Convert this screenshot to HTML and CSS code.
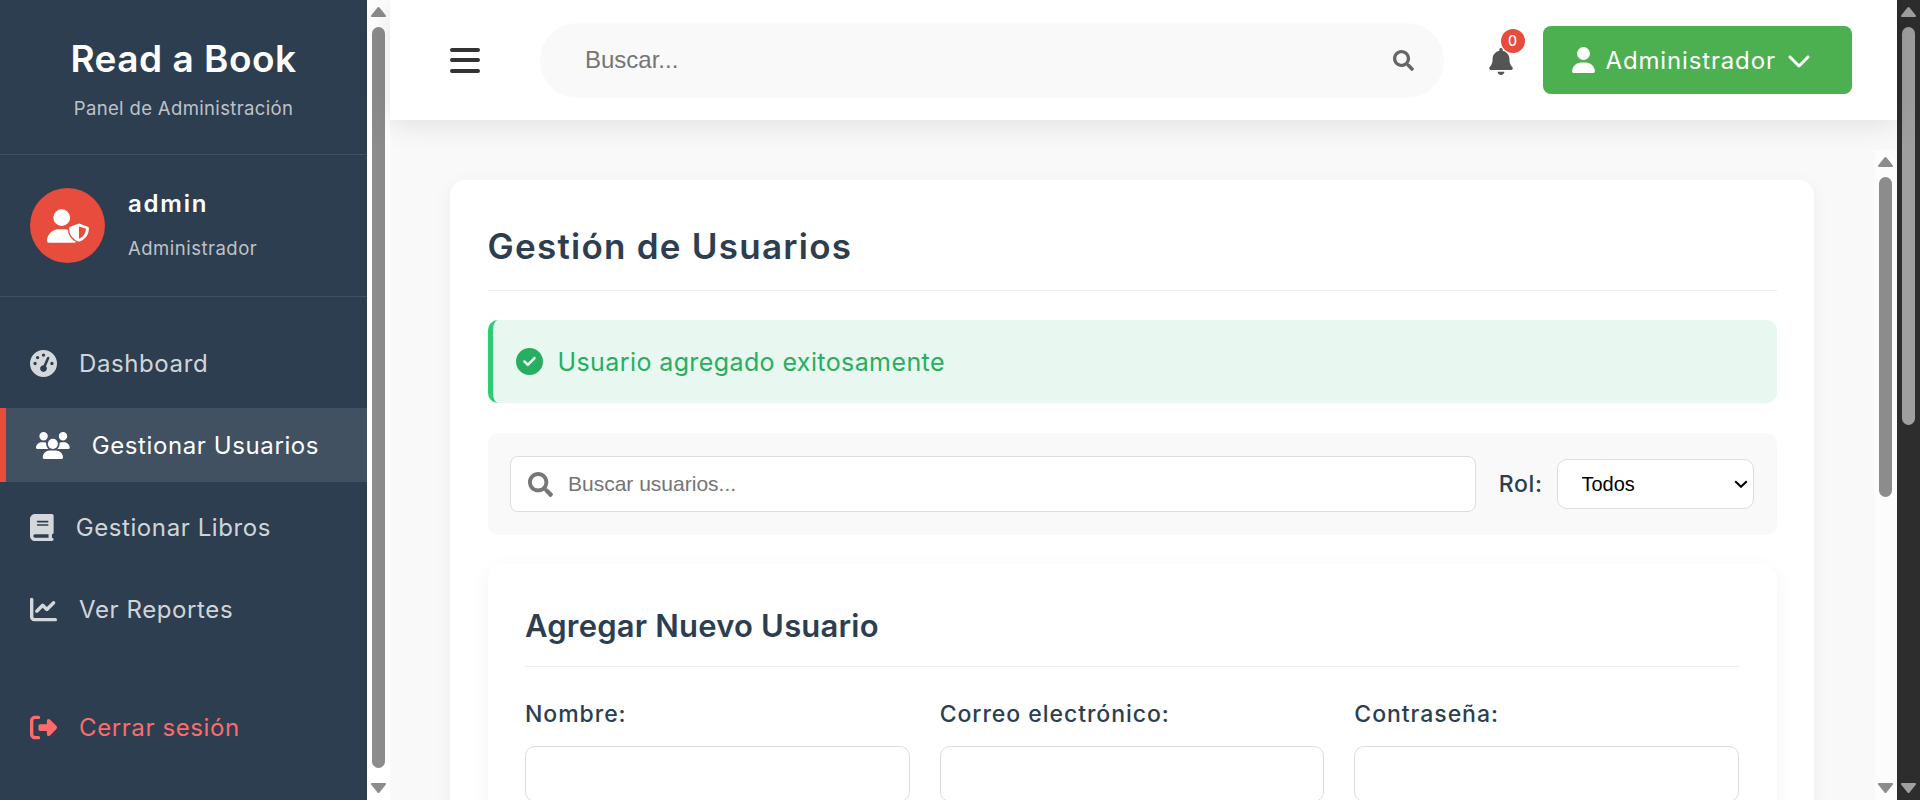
FILE: index.html
```html
<!DOCTYPE html>
<html lang="es">
<head>
    <meta charset="UTF-8">
    <title>Gestión de Usuarios - Read a Book</title>
    <link rel="stylesheet" href="styles.css">
</head>
<body>
    <aside class="sidebar">
        <div class="sidebar-header">
            <h1>Read a Book</h1>
            <p>Panel de Administración</p>
        </div>
        <div class="sidebar-user">
            <div class="avatar">
                <svg viewBox="0 0 640 512" class="avatar-icon">
                    <path fill="#fff" d="M224 256A128 128 0 1 0 224 0a128 128 0 1 0 0 256zm-45.7 48C79.8 304 0 383.8 0 482.3C0 498.7 13.3 512 29.7 512H418.3c16.4 0 29.7-13.3 29.7-29.7C448 383.8 368.2 304 269.7 304H178.3z"/>
                    <path fill="#fff" stroke="#e74c3c" stroke-width="44" paint-order="stroke" d="M488 217L624 268c8 3 14 10 14 19c0 90-40 165-140 206c-6 2-14 2-20 0C376 452 338 377 338 287c0-9 6-16 14-19Z"/>
                    <path fill="#e74c3c" d="M488 262V452C556 420 590 365 594 298Z"/>
                </svg>
            </div>
            <div class="user-info">
                <span class="user-name">admin</span>
                <span class="user-role">Administrador</span>
            </div>
        </div>
        <nav class="nav">
            <a class="nav-item" href="#">
                <svg class="nav-icon" viewBox="0 0 512 512"><path d="M0 256a256 256 0 1 1 512 0A256 256 0 1 1 0 256zM288 96a32 32 0 1 0 -64 0 32 32 0 1 0 64 0zM256 416c35.3 0 64-28.7 64-64c0-17.4-6.9-33.1-18.1-44.6L366 161.7c5.3-12.1-.2-26.3-12.3-31.6s-26.3 .2-31.6 12.3L257.9 288c-.6 0-1.3 0-1.9 0c-35.3 0-64 28.7-64 64s28.7 64 64 64zM176 144a32 32 0 1 0 -64 0 32 32 0 1 0 64 0zM96 288a32 32 0 1 0 0-64 32 32 0 1 0 0 64zm352-32a32 32 0 1 0 -64 0 32 32 0 1 0 64 0z"/></svg>
                Dashboard
            </a>
            <a class="nav-item active" href="#">
                <svg class="nav-icon" viewBox="0 0 640 512"><path d="M144 0a80 80 0 1 1 0 160A80 80 0 1 1 144 0zM512 0a80 80 0 1 1 0 160A80 80 0 1 1 512 0zM0 298.7C0 239.8 47.8 192 106.7 192h42.7c15.9 0 31 3.5 44.6 9.7c-1.3 7.2-1.9 14.7-1.9 22.3c0 38.2 16.8 72.5 43.3 96c-.2 0-.4 0-.7 0H21.3C9.6 320 0 310.4 0 298.7zM405.3 320c-.2 0-.4 0-.7 0c26.6-23.5 43.3-57.8 43.3-96c0-7.6-.7-15-1.9-22.3c13.6-6.3 28.7-9.7 44.6-9.7h42.7C592.2 192 640 239.8 640 298.7c0 11.8-9.6 21.3-21.3 21.3H405.3zM224 224a96 96 0 1 1 192 0 96 96 0 1 1 -192 0zM128 485.3C128 411.7 187.7 352 261.3 352H378.7C452.3 352 512 411.7 512 485.3c0 14.7-11.9 26.7-26.7 26.7H154.7c-14.7 0-26.7-11.9-26.7-26.7z"/></svg>
                Gestionar Usuarios
            </a>
            <a class="nav-item" href="#">
                <svg class="nav-icon" viewBox="0 0 448 512"><path d="M96 0C43 0 0 43 0 96V416c0 53 43 96 96 96H384h32c17.7 0 32-14.3 32-32s-14.3-32-32-32V384c17.7 0 32-14.3 32-32V32c0-17.7-14.3-32-32-32H384 96zm0 384H352v64H96c-17.7 0-32-14.3-32-32s14.3-32 32-32zm32-240c0-8.8 7.2-16 16-16H336c8.8 0 16 7.2 16 16s-7.2 16-16 16H144c-8.8 0-16-7.2-16-16zm16 48H336c8.8 0 16 7.2 16 16s-7.2 16-16 16H144c-8.8 0-16-7.2-16-16s7.2-16 16-16z"/></svg>
                Gestionar Libros
            </a>
            <a class="nav-item" href="#">
                <svg class="nav-icon" viewBox="0 0 512 512"><path d="M64 64c0-17.7-14.3-32-32-32S0 46.3 0 64V400c0 44.2 35.8 80 80 80H480c17.7 0 32-14.3 32-32s-14.3-32-32-32H80c-8.8 0-16-7.2-16-16V64zm406.6 86.6c12.5-12.5 12.5-32.8 0-45.3s-32.8-12.5-45.3 0L320 210.7l-57.4-57.4c-12.5-12.5-32.8-12.5-45.3 0l-112 112c-12.5 12.5-12.5 32.8 0 45.3s32.8 12.5 45.3 0L240 221.3l57.4 57.4c12.5 12.5 32.8 12.5 45.3 0l128-128z"/></svg>
                Ver Reportes
            </a>
            <a class="nav-item logout" href="#">
                <svg class="nav-icon" viewBox="0 0 512 512"><path d="M377.9 105.9L500.7 228.7c7.2 7.2 11.3 17.1 11.3 27.3s-4.1 20.1-11.3 27.3L377.9 406.1c-6.4 6.4-15 9.9-24 9.9c-18.7 0-33.9-15.2-33.9-33.9l0-62.1-128 0c-17.7 0-32-14.3-32-32l0-64c0-17.7 14.3-32 32-32l128 0 0-62.1c0-18.7 15.2-33.9 33.9-33.9c9 0 17.6 3.6 24 9.9zM160 96L96 96c-17.7 0-32 14.3-32 32l0 256c0 17.7 14.3 32 32 32l64 0c17.7 0 32 14.3 32 32s-14.3 32-32 32l-64 0c-53 0-96-43-96-96L0 128C0 75 43 32 96 32l64 0c17.7 0 32 14.3 32 32s-14.3 32-32 32z"/></svg>
                Cerrar sesión
            </a>
        </nav>
    </aside>

    <div class="scrollbar sidebar-scroll">
        <svg class="arrow" viewBox="0 0 15 10"><path d="M6.5 .6c.5-.7 1.500-.7 2 0l6.200 7.600c.6 .8 .2 1.800-.8 1.800H1.100c-1 0-1.400-1-.8-1.800z"/></svg>
        <span class="thumb"></span>
        <svg class="arrow arrow-down" viewBox="0 0 15 10"><path d="M6.5 .6c.5-.7 1.500-.7 2 0l6.200 7.600c.6 .8 .2 1.800-.8 1.800H1.100c-1 0-1.400-1-.8-1.800z"/></svg>
    </div>

    <div class="main">
        <header class="topbar">
            <button class="menu-toggle"><span></span><span></span><span></span></button>
            <div class="top-search">
                <input type="text" placeholder="Buscar...">
                <svg viewBox="0 0 512 512"><path d="M505 442.7L405.3 343c-4.5-4.5-10.6-7-17-7H372c27.6-35.3 44-79.7 44-128C416 93.1 322.9 0 208 0S0 93.1 0 208s93.1 208 208 208c48.3 0 92.7-16.4 128-44v16.3c0 6.4 2.5 12.5 7 17l99.7 99.7c9.4 9.4 24.6 9.4 33.9 0l28.3-28.3c9.4-9.4 9.4-24.6.1-34zM208 336c-70.7 0-128-57.2-128-128 0-70.7 57.2-128 128-128 70.7 0 128 57.2 128 128 0 70.7-57.2 128-128 128z"/></svg>
            </div>
            <div class="bell">
                <svg viewBox="0 0 448 512"><path d="M224 0c-17.7 0-32 14.3-32 32V51.2C119 66 64 130.6 64 208v18.8c0 47-17.3 92.4-48.5 127.6l-7.4 8.3c-8.4 9.4-10.4 22.9-5.3 34.4S19.4 416 32 416H416c12.6 0 24-7.4 29.2-18.9s3.1-25-5.3-34.4l-7.4-8.3C401.3 319.2 384 273.9 384 226.8V208c0-77.4-55-142-128-156.8V32c0-17.7-14.3-32-32-32zm45.3 493.3c12-12 18.7-28.3 18.7-45.3H224 160c0 17 6.7 33.3 18.7 45.3s28.3 18.7 45.3 18.7s33.3-6.7 45.3-18.7z"/></svg>
                <span class="badge">0</span>
            </div>
            <button class="admin-btn">
                <svg class="admin-user" viewBox="0 0 448 512"><path d="M224 256A128 128 0 1 0 224 0a128 128 0 1 0 0 256zm-45.7 48C79.8 304 0 383.8 0 482.3C0 498.7 13.3 512 29.7 512H418.3c16.4 0 29.7-13.3 29.7-29.7C448 383.8 368.2 304 269.7 304H178.3z"/></svg>
                Administrador
                <svg class="admin-caret" viewBox="0 0 512 512"><path d="M233.4 406.6c12.5 12.5 32.8 12.5 45.3 0l192-192c12.5-12.5 12.5-32.8 0-45.3s-32.8-12.5-45.3 0L256 338.7 86.6 169.4c-12.5-12.5-32.8-12.5-45.3 0s-12.5 32.8 0 45.3l192 192z"/></svg>
            </button>
        </header>

        <div class="body-area">
            <main class="content">
                <section class="card">
                    <h2>Gestión de Usuarios</h2>
                    <div class="alert">
                        <svg viewBox="0 0 512 512"><path d="M256 512A256 256 0 1 0 256 0a256 256 0 1 0 0 512zM369 209L241 337c-9.4 9.4-24.6 9.4-33.9 0l-64-64c-9.4-9.4-9.4-24.6 0-33.9s24.6-9.4 33.9 0l47 47L335 175c9.4-9.4 24.6-9.4 33.9 0s9.4 24.6 0 33.9z"/></svg>
                        Usuario agregado exitosamente
                    </div>
                    <div class="filters">
                        <div class="filter-search">
                            <svg viewBox="0 0 512 512"><path d="M505 442.7L405.3 343c-4.5-4.5-10.6-7-17-7H372c27.6-35.3 44-79.7 44-128C416 93.1 322.9 0 208 0S0 93.1 0 208s93.1 208 208 208c48.3 0 92.7-16.4 128-44v16.3c0 6.4 2.5 12.5 7 17l99.7 99.7c9.4 9.4 24.6 9.4 33.9 0l28.3-28.3c9.4-9.4 9.4-24.6.1-34zM208 336c-70.7 0-128-57.2-128-128 0-70.7 57.2-128 128-128 70.7 0 128 57.2 128 128 0 70.7-57.2 128-128 128z"/></svg>
                            <input type="text" placeholder="Buscar usuarios...">
                        </div>
                        <label class="role-label" for="role">Rol:</label>
                        <select id="role" class="role-select">
                            <option>Todos</option>
                            <option>Administrador</option>
                            <option>Usuario</option>
                        </select>
                    </div>
                    <div class="form-card">
                        <h3>Agregar Nuevo Usuario</h3>
                        <form class="form-grid">
                            <div class="field">
                                <label for="nombre">Nombre:</label>
                                <input id="nombre" type="text">
                            </div>
                            <div class="field">
                                <label for="correo">Correo electrónico:</label>
                                <input id="correo" type="email">
                            </div>
                            <div class="field">
                                <label for="clave">Contraseña:</label>
                                <input id="clave" type="password">
                            </div>
                        </form>
                    </div>
                </section>
            </main>
            <div class="scrollbar content-scroll">
                <svg class="arrow" viewBox="0 0 15 10"><path d="M6.5 .6c.5-.7 1.500-.7 2 0l6.200 7.600c.6 .8 .2 1.800-.8 1.800H1.100c-1 0-1.400-1-.8-1.800z"/></svg>
                <span class="thumb"></span>
                <svg class="arrow arrow-down" viewBox="0 0 15 10"><path d="M6.5 .6c.5-.7 1.500-.7 2 0l6.200 7.600c.6 .8 .2 1.800-.8 1.800H1.100c-1 0-1.400-1-.8-1.800z"/></svg>
            </div>
        </div>
    </div>

    <div class="scrollbar window-scroll">
        <svg class="arrow" viewBox="0 0 15 10"><path d="M6.5 .6c.5-.7 1.500-.7 2 0l6.200 7.600c.6 .8 .2 1.800-.8 1.800H1.100c-1 0-1.400-1-.8-1.800z"/></svg>
        <span class="thumb"></span>
        <svg class="arrow arrow-down" viewBox="0 0 15 10"><path d="M6.5 .6c.5-.7 1.500-.7 2 0l6.200 7.600c.6 .8 .2 1.800-.8 1.800H1.100c-1 0-1.400-1-.8-1.800z"/></svg>
    </div>
</body>
</html>
```

FILE: styles.css
```css
* {
    box-sizing: border-box;
}

html, body {
    height: 100%;
}

body {
    margin: 0;
    display: flex;
    height: 800px;
    overflow: hidden;
    font-family: 'Inter', 'Liberation Sans', sans-serif;
    background: #f9f9f9;
    color: #2c3e50;
}

svg {
    display: block;
    fill: currentColor;
}

/* Sidebar */
.sidebar {
    width: 367px;
    flex-shrink: 0;
    background: #2c3e50;
    color: #fff;
}

.sidebar-header {
    height: 155px;
    padding-top: 33px;
    text-align: center;
    border-bottom: 1px solid rgba(255, 255, 255, 0.1);
}

.sidebar-header h1 {
    margin: 0;
    font-size: 37px;
    line-height: 52px;
    font-weight: 600;
    letter-spacing: 0.5px;
}

.sidebar-header p {
    margin: 10px 0 0;
    font-size: 18.5px;
    line-height: 26px;
    letter-spacing: 0.35px;
    color: rgba(255, 255, 255, 0.7);
}

.sidebar-user {
    height: 142px;
    display: flex;
    align-items: center;
    gap: 23px;
    padding: 0 30px;
    border-bottom: 1px solid rgba(255, 255, 255, 0.1);
}

.avatar {
    width: 75px;
    height: 75px;
    border-radius: 50%;
    background: #e74c3c;
    display: flex;
    align-items: center;
    justify-content: center;
}

.avatar-icon {
    width: 42px;
    height: 34px;
}

.user-info {
    display: flex;
    flex-direction: column;
    gap: 15px;
    padding-bottom: 4px;
}

.user-name {
    font-size: 24px;
    line-height: 33px;
    font-weight: 600;
    letter-spacing: 1.8px;
}

.user-role {
    font-size: 18.5px;
    line-height: 26px;
    letter-spacing: 0.5px;
    color: rgba(255, 255, 255, 0.7);
}

.nav {
    padding-top: 29px;
    display: flex;
    flex-direction: column;
    gap: 8px;
}

.nav-item {
    height: 74px;
    padding: 0 30px;
    display: flex;
    align-items: center;
    gap: 22px;
    font-size: 24px;
    letter-spacing: 0.6px;
    color: rgba(255, 255, 255, 0.8);
    text-decoration: none;
}

.nav-item.active {
    background: rgba(255, 255, 255, 0.1);
    border-left: 6px solid #e74c3c;
    color: #fff;
}

.nav-item.logout {
    margin-top: 36px;
    color: #ff6b6b;
}

.nav-icon {
    height: 27px;
    flex-shrink: 0;
}

/* Scrollbars */
.scrollbar {
    width: 23px;
    flex-shrink: 0;
    display: flex;
    flex-direction: column;
    align-items: center;
    padding: 7px 0;
    gap: 10px;
    color: #8c8c8c;
}

.arrow {
    width: 15px;
    height: 10px;
    flex-shrink: 0;
}

.arrow-down {
    margin-top: auto;
    transform: rotate(180deg);
}

.thumb {
    width: 13px;
    border-radius: 7px;
    background: #8c8c8c;
}

.sidebar-scroll {
    background: #fff;
}

.sidebar-scroll .thumb {
    height: 741px;
}

.window-scroll {
    background: #2d2d2d;
    color: #a0a0a0;
}

.window-scroll .thumb {
    height: 398px;
    background: #9f9f9f;
}

.content-scroll {
    background: #fcfcfc;
}

.content-scroll .thumb {
    height: 320px;
}

/* Main */
.main {
    flex: 1;
    min-width: 0;
    display: flex;
    flex-direction: column;
}

.topbar {
    position: relative;
    z-index: 1;
    height: 120px;
    flex-shrink: 0;
    background: #fff;
    box-shadow: 0 2px 30px rgba(0, 0, 0, 0.12);
    display: flex;
    align-items: center;
    padding: 0 45.5px 0 60px;
}

.menu-toggle {
    width: 30px;
    padding: 0;
    border: none;
    background: none;
    display: flex;
    flex-direction: column;
    gap: 6.5px;
    margin-right: 60px;
}

.menu-toggle span {
    height: 4px;
    border-radius: 2px;
    background: #333;
}

.top-search {
    flex: 1;
    height: 75px;
    border-radius: 38px;
    background: #f9f9f9;
    display: flex;
    align-items: center;
    padding: 0 30px 0 45px;
    margin-right: 45px;
    color: #666;
}

.top-search input {
    flex: 1;
    padding: 0;
    border: none;
    outline: none;
    background: none;
    font-family: 'Liberation Sans', sans-serif;
    font-size: 24px;
}

.top-search svg {
    width: 21px;
    height: 21px;
}

.bell {
    position: relative;
    width: 24px;
    margin-right: 30px;
    color: #555;
}

.bell svg {
    width: 24px;
    height: 27px;
    margin-top: 3px;
}

.badge {
    position: absolute;
    top: -16px;
    right: -12px;
    width: 24px;
    height: 24px;
    border-radius: 50%;
    background: #e74c3c;
    color: #fff;
    font-size: 14px;
    font-weight: 500;
    line-height: 24px;
    text-align: center;
}

.admin-btn {
    width: 309px;
    height: 68px;
    padding: 0 0 0 29px;
    border: none;
    border-radius: 8px;
    background: #4caf50;
    color: #fff;
    font-family: inherit;
    font-size: 24px;
    letter-spacing: 0.85px;
    display: flex;
    align-items: center;
    gap: 11px;
}

.admin-user {
    width: 23px;
    height: 26px;
}

.admin-caret {
    width: 24px;
    height: 24px;
}

.body-area {
    flex: 1;
    min-height: 0;
    display: flex;
    padding-top: 30px;
}

.content {
    flex: 1;
    min-width: 0;
    padding: 30px 60px;
}

/* Cards */
.card {
    background: #fff;
    border-radius: 15px;
    padding: 42px 37.5px 37.5px;
    box-shadow: 0 5px 20px rgba(0, 0, 0, 0.05);
}

.card h2 {
    margin: 0;
    padding-bottom: 20px;
    font-size: 35px;
    line-height: 48px;
    font-weight: 600;
    letter-spacing: 1.25px;
    border-bottom: 1px solid #eee;
}

.alert {
    margin-top: 29px;
    height: 83px;
    display: flex;
    align-items: center;
    gap: 15px;
    padding-left: 23px;
    background: #e8f8f0;
    border-left: 5px solid #2ecc71;
    border-radius: 10px;
    color: #27ae60;
    font-size: 25px;
    letter-spacing: 0.4px;
}

.alert svg {
    width: 27px;
    height: 27px;
}

.filters {
    margin-top: 30px;
    height: 102px;
    padding: 0 23px 0 22.5px;
    background: #f9f9f9;
    border-radius: 10px;
    display: flex;
    align-items: center;
}

.filter-search {
    flex: 1;
    height: 56px;
    background: #fff;
    border: 1px solid #ddd;
    border-radius: 8px;
    display: flex;
    align-items: center;
    gap: 15px;
    padding-left: 17px;
    color: #777;
}

.filter-search svg {
    width: 25px;
    height: 25px;
}

.filter-search input {
    flex: 1;
    padding: 0;
    border: none;
    outline: none;
    font-family: 'Liberation Sans', sans-serif;
    font-size: 21px;
}

.role-label {
    margin: 0 14px 0 23px;
    font-size: 23px;
    font-weight: 500;
    letter-spacing: 0.6px;
}

.role-select {
    width: 197px;
    height: 50px;
    padding: 0 24px;
    appearance: none;
    background: #fff url("data:image/svg+xml,%3Csvg xmlns='http://www.w3.org/2000/svg' viewBox='0 0 14 8'%3E%3Cpath d='M1.200 1.200L7 6.800l5.800-5.600' fill='none' stroke='%23000' stroke-width='2'/%3E%3C/svg%3E") no-repeat right 5px center / 14px 8px;
    border: 1px solid #ddd;
    border-radius: 10px;
    font-family: 'Liberation Sans', sans-serif;
    font-size: 20px;
    color: #000;
}

.form-card {
    margin-top: 29px;
    padding: 40px 37.5px 37.5px;
    background: #fff;
    border-radius: 15px;
    box-shadow: 0 5px 20px rgba(0, 0, 0, 0.05);
}

.form-card h3 {
    margin: 0;
    padding-bottom: 18px;
    font-size: 31px;
    line-height: 44px;
    font-weight: 600;
    letter-spacing: 0.2px;
    border-bottom: 1px solid #eee;
}

.form-grid {
    margin-top: 31px;
    display: grid;
    grid-template-columns: repeat(3, 1fr);
    gap: 30px;
}

.field label {
    display: block;
    margin-bottom: 15px;
    font-size: 23px;
    line-height: 33px;
    font-weight: 500;
    letter-spacing: 0.95px;
}

.field input {
    width: 100%;
    height: 56px;
    border: 1px solid #ddd;
    border-radius: 10px;
    background: #fff;
}
```
